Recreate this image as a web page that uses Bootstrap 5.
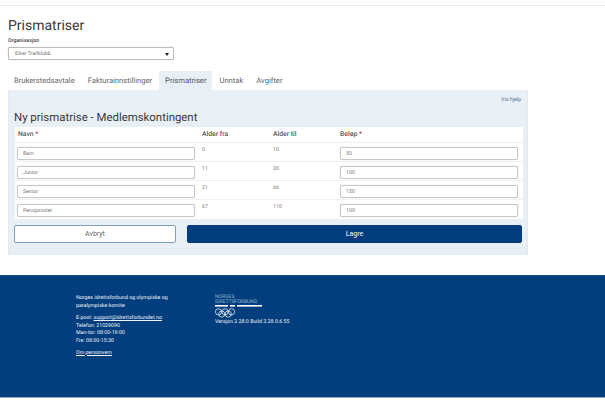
<!DOCTYPE html>
<html lang="no"><head><meta charset="utf-8">
<link href="https://cdn.jsdelivr.net/npm/bootstrap@5.3.0/dist/css/bootstrap.min.css" rel="stylesheet">
<style>
html,body{height:407px;overflow:hidden;background:#fff}
body{font-family:Roboto,"Liberation Sans",sans-serif;color:#444;font-size:6px;line-height:1.2;text-rendering:geometricPrecision}
.topline{height:6px;border-bottom:1px solid #eaeaea}
.pagewrap{padding:11px 8px 0;height:269px}
.ptitle{font-size:14px;font-weight:400;color:#3a3a3a;margin:0;line-height:19px}
.orglabel{font-size:5.3px;font-weight:500;margin:2px 0 0;line-height:7px;color:#444;display:block}
.orgselect{width:166px;height:13px;border:1px solid #bdbdbd;border-radius:1px;margin-top:2px;padding:1px 6px 0;display:flex;align-items:center;justify-content:space-between;font-size:5.3px;color:#777;box-shadow:0 0 1px #bbb}
.caretdown{width:0;height:0;border-left:2px solid transparent;border-right:2px solid transparent;border-top:3px solid #222;margin-right:-2px}
.tabrow{margin-top:11px;height:19px;padding:0;gap:0;border:0}
.tabrow .nav-link{font-size:7.6px;padding:0 6px;line-height:19px;color:#666;border:0;border-radius:0;margin-right:1px;background:transparent}
.tabrow .nav-link.active{background:#e8f0f6;color:#555}
.panelbox{width:520px;height:165px;background:#e8f0f6;border:1px solid #e3e9ee;border-top:0;padding:0 5px}
.helplink{font-size:5.3px;text-align:right;color:#4a6a8a;line-height:7px;padding-top:7px;padding-right:1px;text-decoration:none;display:block}
.paneltitle{font-size:11.4px;font-weight:400;color:#3a3a3a;margin:6px 0 0;line-height:15px}
.pricetbl{width:508px;margin:2px 0 0 1px;background:#fff}
.pricetbl .rowhead,.pricetbl .rowdata{display:grid;grid-template-columns:187px 71px 67px 1fr;border-bottom:1px solid #f1f1f1}
.rowhead{height:16px;align-items:center;font-size:6.8px;font-weight:500;color:#555}
.rowhead>div:first-child{padding-left:3px}
.rowdata{height:19px;font-size:5.3px;color:#777}
.rowdata>div{padding-top:4px;padding-left:0}
.rowdata>.numcell{padding-top:4px;line-height:7px}
.rowdata:last-child{border-bottom:0}
.cellnm{padding-left:2px!important}
.fakeinput{height:13px;width:178px;border:1px solid #c4c8c8;border-radius:2px;background:#fff;padding:1px 0 0 5px;line-height:11px;font-size:5.3px;color:#777;box-shadow:0 0 1px #ccc}
.reqmark{color:#b02a37}
.actionrow{display:flex;gap:11px;margin-top:6px;width:508px}
.btnghost,.btnsave{height:18px;border-radius:2px;font-size:7px;line-height:1;padding:0;display:flex;align-items:center;justify-content:center}
.btnghost{width:162px;background:#fff;border:1px solid #7f9fbd;color:#666}
.btnsave{flex:1;background:#023e7d;border:1px solid #023e7d;color:#cfe0ef;font-weight:500}
.sitefoot{background:#023e7d;height:123px;color:#eef3f8;font-size:5.3px;line-height:7.6px;display:flex;border-bottom:1px solid #8aa8c8;border-top:1px solid #1d5490}
.footleft{margin-left:76px;width:138px;padding-top:19px}
.footleft p{margin:0}
.footleft a{color:#eef3f8}
.footright{padding-top:19px;margin-left:1px}
.brandtxt{font-size:5px;line-height:4.6px;color:#d6e2ee;font-weight:300}
.versiontxt{font-size:5.3px;line-height:7px;margin-top:1px}
</style></head><body>
<div class="topline"></div>
<div class="pagewrap">
<h1 class="ptitle">Prismatriser</h1>
<label class="orglabel">Organisasjon</label>
<div class="orgselect"><span>Eiker Trailklubb</span><span class="caretdown"></span></div>
<ul class="nav nav-tabs tabrow">
<li class="nav-item"><a class="nav-link" href="#">Brukerstedsavtale</a></li>
<li class="nav-item"><a class="nav-link" href="#">Fakturainnstillinger</a></li>
<li class="nav-item"><a class="nav-link active" href="#">Prismatriser</a></li>
<li class="nav-item"><a class="nav-link" href="#">Unntak</a></li>
<li class="nav-item"><a class="nav-link" href="#">Avgifter</a></li>
</ul>
<div class="panelbox">
<a class="helplink" href="#">Vis hjelp</a>
<h2 class="paneltitle">Ny prismatrise - Medlemskontingent</h2>
<div class="pricetbl">
<div class="rowhead"><div>Navn <span class="reqmark">*</span></div><div>Alder fra</div><div>Alder til</div><div>Beløp <span class="reqmark">*</span></div></div>
<div class="rowdata"><div class="cellnm"><div class="fakeinput">Barn</div></div><div class="numcell">0</div><div class="numcell">10</div><div><div class="fakeinput">50</div></div></div>
<div class="rowdata"><div class="cellnm"><div class="fakeinput">Junior</div></div><div class="numcell">11</div><div class="numcell">20</div><div><div class="fakeinput">100</div></div></div>
<div class="rowdata"><div class="cellnm"><div class="fakeinput">Senior</div></div><div class="numcell">21</div><div class="numcell">66</div><div><div class="fakeinput">150</div></div></div>
<div class="rowdata"><div class="cellnm"><div class="fakeinput">Pensjonister</div></div><div class="numcell">67</div><div class="numcell">110</div><div><div class="fakeinput">100</div></div></div>
</div>
<div class="actionrow"><button class="btnghost">Avbryt</button><button class="btnsave">Lagre</button></div>
</div>
</div>
<footer class="sitefoot">
<div class="footleft">
<p>Norges idrettsforbund og olympiske og<br>paralympiske komite</p>
<p style="margin-top:5px">E-post: <a href="#">support@idrettsforbundet.no</a><br>Telefon: 21029090<br>Man-tor: 08:00-19:00<br>Fre: 08:00-15:30</p>
<p style="margin-top:4px"><a href="#">Om personvern</a></p>
</div>
<div class="footright">
<div class="brandtxt">NORGES<br>IDRETTSFORBUND</div>
<svg width="48" height="14" viewBox="0 0 48 14" style="display:block"><g fill="#fff"><rect x="0" y="1" width="13" height="1.6"/><rect x="15" y="1" width="5" height="1.6"/><rect x="22" y="1" width="25" height="1.6"/></g><g fill="none" stroke="#fff" stroke-width=".7"><circle cx="3.5" cy="7.8" r="3.1"/><circle cx="10" cy="7.8" r="3.1"/><circle cx="16.5" cy="7.8" r="3.1"/><circle cx="6.75" cy="10" r="3.1"/><circle cx="13.25" cy="10" r="3.1"/></g></svg>
<div class="versiontxt">Versjon 3.28.0 Build 3.28.0.6 55</div>
</div>
</footer>
<script src="https://cdn.jsdelivr.net/npm/bootstrap@5.3.0/dist/js/bootstrap.bundle.min.js"></script>
</body></html>
